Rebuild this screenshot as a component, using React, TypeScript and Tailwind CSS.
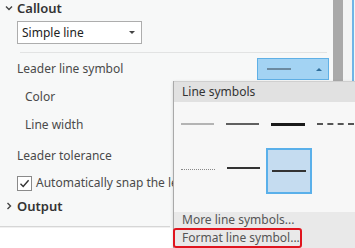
import React from "react";

const font = { fontFamily: '"Noto Sans", "Open Sans", sans-serif' };

function Chevron({ open }: { open: boolean }) {
  return (
    <svg width="8" height="8" viewBox="0 0 8 8" className="text-[#444]">
      {open ? (
        <path d="M1 2.5 L4 5.5 L7 2.5" fill="none" stroke="currentColor" strokeWidth="1.4" />
      ) : (
        <path d="M2.5 1 L5.5 4 L2.5 7" fill="none" stroke="currentColor" strokeWidth="1.4" />
      )}
    </svg>
  );
}

function LineSwatch({ kind }: { kind: string }) {
  if (kind === "thin") return <div className="w-[33px] h-[2px] bg-[#b4b4b4]" />;
  if (kind === "mid") return <div className="w-[33px] h-[2px] bg-[#606060]" />;
  if (kind === "thick") return <div className="w-[34px] h-[3px] bg-[#1a1a1a]" />;
  if (kind === "dash")
    return <div className="w-[37px] border-t-2 border-dashed border-[#555]" />;
  if (kind === "dot")
    return <div className="w-[34px] border-t border-dotted border-[#888]" />;
  return <div className="w-[33px] h-[2px] bg-[#333]" />;
}

export default function App() {
  return (
    <div className="relative w-[355px] h-[248px] overflow-hidden bg-[#f7f8f8] text-[#4a4a4a]" style={font}>
      <div className="flex h-[226px]">
        {/* pane content */}
        <div className="w-[333px] flex flex-col">
          <div className="flex items-center h-[16px] pl-[5px] gap-[4px]">
            <Chevron open />
            <span className="text-[13px] font-semibold text-[#333] leading-none">Callout</span>
          </div>
          <div className="ml-[17px] mt-[5px] w-[125px] h-[23px] border border-[#adadad] bg-white flex items-center justify-between px-[4px]">
            <span className="text-[12px] text-[#222]">Simple line</span>
            <span className="w-0 h-0 border-l-[3px] border-r-[3px] border-t-[3px] border-l-transparent border-r-transparent border-t-[#444] mr-[2px]" />
          </div>
          <div className="ml-[20px] mr-[6px] mt-[8px] h-px bg-[#e2e3e3]" />
          <div className="flex items-center justify-between mt-[5px] pl-[17px] pr-[4px] h-[22px]">
            <span className="text-[12px]">Leader line symbol</span>
            <div className="w-[72px] h-[22px] bg-[#a3d3f3] border border-[#5fb0e6] flex items-center justify-between pl-[9px] pr-[6px]">
              <div className="w-[24px] h-[2px] bg-[#6c8aa0]" />
              <span className="w-0 h-0 border-l-[3px] border-r-[3px] border-b-[3px] border-l-transparent border-r-transparent border-b-[#2f6e9c]" />
            </div>
          </div>
          <div className="pl-[25px] mt-[8px] h-[18px] text-[12px] flex items-center">Color</div>
          <div className="pl-[25px] mt-[10px] h-[18px] text-[12px] flex items-center">Line width</div>
          <div className="pl-[17px] mt-[13px] h-[18px] text-[12px] flex items-center">Leader tolerance</div>
          <div className="pl-[17px] mt-[10px] h-[16px] flex items-center gap-[4px]">
            <div className="w-[15px] h-[15px] border border-[#8a8a8a] bg-white flex items-center justify-center">
              <svg width="11" height="11" viewBox="0 0 11 11">
                <path d="M1.5 5.8 L4.2 8.5 L9.6 2.2" fill="none" stroke="#333" strokeWidth="1.4" />
              </svg>
            </div>
            <span className="text-[12px] whitespace-nowrap">Automatically snap the leader line</span>
          </div>
          <div className="flex items-center h-[16px] mt-[7px] pl-[5px] gap-[4px]">
            <Chevron open={false} />
            <span className="text-[13px] font-semibold text-[#333] leading-none">Output</span>
          </div>
        </div>
        {/* scrollbar + edge */}
        <div className="w-[10px] bg-[#a9a9a9]" />
        <div className="w-[9px] bg-[#f3f4f4]" />
        <div className="w-[2px] bg-[#6fb5e6]" />
        <div className="flex-1 bg-[#f3f4f4]" />
      </div>
      <div className="border-t border-[#d6d6d6] h-[2px] w-[170px] bg-[#f0f0f0]" />
      <div className="h-[20px] bg-white" />

      {/* line symbol gallery popup */}
      <div className="absolute left-[173px] top-[81px] right-0 bottom-0 flex flex-col border-l border-[#a9a9a9] shadow-[0_1px_3px_rgba(0,0,0,0.15)]">
        <div className="h-[21px] bg-[#e1e1e1] border-t border-[#cfcfcf] flex items-center pl-[8px] text-[12px] text-[#333]">
          Line symbols
        </div>
        <div className="flex-1 bg-[#f7f7f7] pl-[7px] pt-[17px]">
          <div className="flex items-center gap-[12px] h-[10px]">
            <LineSwatch kind="thin" />
            <LineSwatch kind="mid" />
            <LineSwatch kind="thick" />
            <LineSwatch kind="dash" />
          </div>
          <div className="flex items-center gap-[12px] mt-[19px]">
            <div className="h-[46px] flex items-center pb-[4px]">
              <LineSwatch kind="dot" />
            </div>
            <div className="h-[46px] flex items-center pb-[7px]">
              <LineSwatch kind="mid2" />
            </div>
            <div className="w-[46px] h-[46px] -ml-[6px] bg-[#c5dcf0] border-2 border-[#5ab0ea] flex items-center justify-center">
              <div className="w-[34px] h-[2px] bg-[#333]" />
            </div>
          </div>
        </div>
        <div className="h-[16px] bg-[#e9e9e9] flex items-center pl-[8px] text-[12px] text-[#555]">
          More line symbols...
        </div>
        <div className="h-[20px] bg-[#e9e9e9] flex">
          <div className="w-[129px] -ml-px border-2 border-[#e0141e] rounded-[3px] flex items-center pl-[7px] text-[12px] text-[#555]">
            Format line symbol...
          </div>
        </div>
      </div>
    </div>
  );
}
